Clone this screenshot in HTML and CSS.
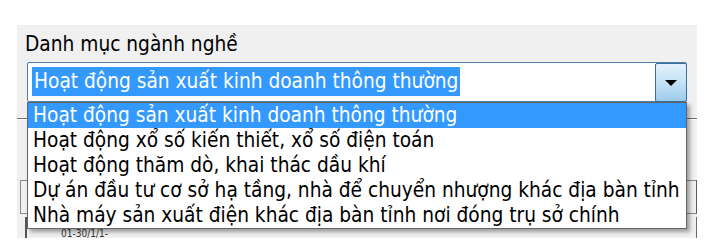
FILE: index.html
```html
<!DOCTYPE html>
<html lang="vi">
<head>
<meta charset="utf-8">
<title>Danh mục ngành nghề</title>
<link rel="stylesheet" href="styles.css">
</head>
<body>
<div class="panel">
  <div class="label">Danh mục ngành nghề</div>
  <div class="combo">
    <div class="combo-field"><span class="sel">Hoạt động sản xuất kinh doanh thông thường</span></div>
    <div class="combo-btn"><span class="tri"></span></div>
  </div>
  <div class="group-line"></div>
  <div class="textbox"></div>
  <div class="textbox2"><span class="hidden-text">01-30/1/1-</span></div>

  <ul class="dropdown">
    <li class="item active">Hoạt động sản xuất kinh doanh thông thường</li>
    <li class="item">Hoạt động xổ số kiến thiết, xổ số điện toán</li>
    <li class="item">Hoạt động thăm dò, khai thác dầu khí</li>
    <li class="item">Dự án đầu tư cơ sở hạ tầng, nhà để chuyển nhượng khác địa bàn tỉnh</li>
    <li class="item">Nhà máy sản xuất điện khác địa bàn tỉnh nơi đóng trụ sở chính</li>
  </ul>
</div>
</body>
</html>
```
FILE: styles.css
```css
html, body {
  margin: 0;
  padding: 0;
  background: #ffffff;
}
body {
  width: 715px;
  height: 250px;
  overflow: hidden;
  font-family: "DejaVu Sans Condensed", "DejaVu Sans", sans-serif;
  font-size: 20.7px;
  color: #000;
  padding-top: 25px;
  box-sizing: border-box;
}
.panel {
  position: relative;
  margin-left: 17px;
  width: 680px;
  height: 213px;
  background: #f0f0f0;
  padding-top: 7px;
  box-sizing: border-box;
  overflow: hidden;
}
.label {
  padding-left: 8px;
  line-height: 24px;
  height: 24px;
}
.combo {
  margin-top: 6px;
  margin-left: 10px;
  width: 660px;
  height: 40px;
  box-sizing: border-box;
  border: 1px solid #4f7fa8;
  border-radius: 2px;
  background: #fff;
  display: flex;
}
.combo-field {
  flex: 1;
  padding: 4px 0 0 4px;
}
.sel {
  display: inline-block;
  background: #3399ff;
  color: #fff;
  height: 29px;
  line-height: 29px;
  padding: 0 2px;
}
.combo-btn {
  width: 32px;
  margin: 0 -1px -1px 0;
  box-sizing: border-box;
  border: 1px solid #3c6e98;
  border-radius: 2px;
  background: linear-gradient(#e4f1fb, #c4e2f6 50%, #9ecbea);
  display: flex;
  align-items: center;
  justify-content: center;
}
.tri {
  width: 0;
  height: 0;
  border-left: 6px solid transparent;
  border-right: 6px solid transparent;
  border-top: 6px solid #000;
}
.group-line {
  margin-top: 16px;
  height: 0;
  border-top: 1px solid #707070;
  border-bottom: 1px solid #ffffff;
}
.textbox {
  margin-top: 60px;
  margin-left: 3px;
  height: 34px;
  box-sizing: border-box;
  border: 1px solid #8a8a8a;
  border-right-color: #5a5a5a;
}
.textbox2 {
  margin-top: 3px;
  margin-left: 8px;
  height: 21px;
  box-sizing: border-box;
  border-left: 2px solid #555;
  border-right: 1px solid #6a6a6a;
  padding-left: 34px;
  padding-top: 12px;
  font-size: 10px;
  line-height: 9px;
  color: #333;
}
.dropdown {
  position: absolute;
  left: 10px;
  top: 77px;
  width: 660px;
  height: 127px;
  box-sizing: border-box;
  margin: 0;
  padding: 0;
  list-style: none;
  background: #fff;
  border: 1px solid #646464;
  box-shadow: 3px 3px 4px rgba(0, 0, 0, 0.35);
}
.item {
  height: 25px;
  line-height: 25px;
  padding-left: 5px;
  white-space: nowrap;
}
.item.active {
  background: #3399ff;
  color: #fff;
}
```
